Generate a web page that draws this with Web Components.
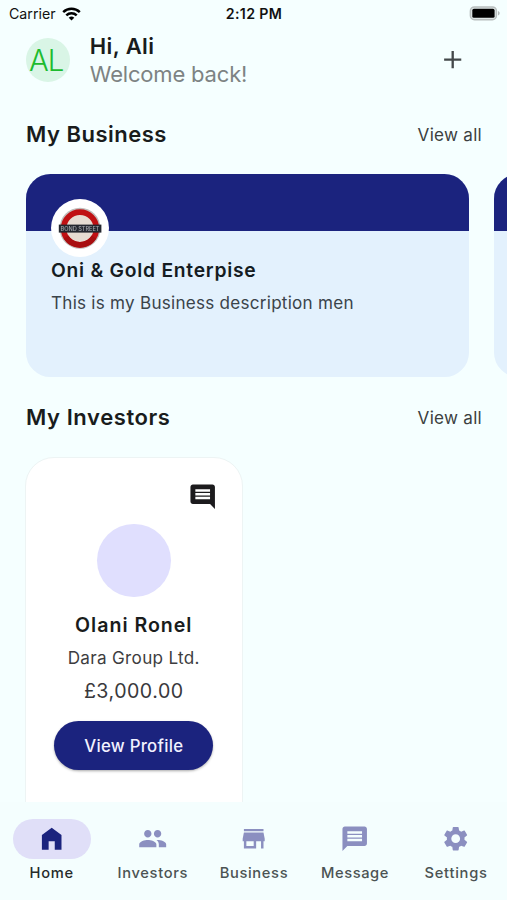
<!DOCTYPE html>
<html lang="en">
<head>
<meta charset="utf-8">
<title>Home</title>
<style>
html, body { margin: 0; height: 100%; }
body { background: #f5ffff; font-family: Inter, "Liberation Sans", sans-serif; color: #191c1c; overflow: hidden; }
</style>
</head>
<body>
<app-screen>
  <status-bar slot="status"></status-bar>
  <user-header initials="AL" greeting="Hi, Ali" message="Welcome back!"></user-header>
  <section-head style="--ls:.5px">My Business</section-head>
  <card-row>
    <business-card>
      <span slot="name">Oni &amp; Gold Enterpise</span>
      <span slot="desc">This is my Business description men</span>
    </business-card>
    <business-card bare></business-card>
  </card-row>
  <section-head style="--ls:.58px">My Investors</section-head>
  <investor-card>
    <span slot="name">Olani Ronel</span>
    <span slot="company">Dara Group Ltd.</span>
    <span slot="amount">£3,000.00</span>
  </investor-card>
  <nav-bar slot="nav">
    <nav-item icon="home" active style="--ls:.75px">Home</nav-item>
    <nav-item icon="people" style="--ls:.66px">Investors</nav-item>
    <nav-item icon="store" style="--ls:.65px">Business</nav-item>
    <nav-item icon="message" style="--ls:.57px">Message</nav-item>
    <nav-item icon="settings" style="--ls:.74px">Settings</nav-item>
  </nav-bar>
</app-screen>
<script>
const ICONS = {
  add: 'M19 12.95h-6.05V19h-1.9v-6.05H5v-1.9h6.05V5h1.9v6.05H19z',
  home: 'M4 21V9l8-6 8 6v12h-5.5v-7h-5v7z',
  people: 'M16 11c1.66 0 2.99-1.34 2.99-3S17.66 5 16 5s-3 1.34-3 3 1.34 3 3 3zm-8 0c1.66 0 2.99-1.34 2.99-3S9.66 5 8 5 5 6.34 5 8s1.34 3 3 3zm0 2c-2.33 0-7 1.17-7 3.5V19h14v-2.5c0-2.33-4.67-3.5-7-3.5zm8 0c-.29 0-.62.02-.97.05 1.16.84 1.97 1.97 1.97 3.45V19h6v-2.5c0-2.33-4.67-3.5-7-3.5z',
  store: 'M20 4H4v2h16V4zm1 10v-2l-1-5H4l-1 5v2h1v6h10v-6h4v6h2v-6h1zm-9 4H6v-4h6v4z',
  message: 'M20 2H4c-1.1 0-1.99.9-1.99 2L2 22l4-4h14c1.1 0 2-.9 2-2V4c0-1.1-.9-2-2-2zm-2 12H6v-2h12v2zm0-3H6V9h12v2zm0-3H6V6h12v2z',
  comment: 'M21.99 4c0-1.1-.89-2-1.99-2H4c-1.1 0-2 .9-2 2v12c0 1.1.9 2 2 2h14l4 4-.01-18zM18 14H6v-2h12v2zm0-3H6V9h12v2zm0-3H6V6h12v2z',
  settings: 'M19.14 12.94c.04-.3.06-.61.06-.94 0-.32-.02-.64-.07-.94l2.03-1.58c.18-.14.23-.41.12-.61l-1.92-3.32c-.12-.22-.37-.29-.59-.22l-2.39.96c-.5-.38-1.03-.7-1.62-.94l-.36-2.54c-.04-.24-.24-.41-.48-.41h-3.84c-.24 0-.43.17-.47.41l-.36 2.54c-.59.24-1.13.57-1.62.94l-2.39-.96c-.22-.08-.47 0-.59.22L2.74 8.87c-.12.21-.08.47.12.61l2.03 1.58c-.05.3-.09.63-.09.94s.02.64.07.94l-2.03 1.58c-.18.14-.23.41-.12.61l1.92 3.32c.12.22.37.29.59.22l2.39-.96c.5.38 1.03.7 1.62.94l.36 2.54c.05.24.24.41.48.41h3.84c.24 0 .44-.17.47-.41l.36-2.54c.59-.24 1.13-.56 1.62-.94l2.39.96c.22.08.47 0 .59-.22l1.92-3.32c.12-.22.07-.47-.12-.61l-2.01-1.58zM12 15.6c-1.98 0-3.6-1.62-3.6-3.6s1.62-3.6 3.6-3.6 3.6 1.62 3.6 3.6-1.62 3.6-3.6 3.6z'
};

const define = (name, render) => customElements.define(name, class extends HTMLElement {
  constructor() { super(); this.attachShadow({ mode: 'open' }); }
  connectedCallback() { this.shadowRoot.innerHTML = render(this); }
});

define('md-icon', el => `
<style>:host{display:block;width:29.4px;height:29.4px}svg{display:block;width:100%;height:100%;fill:currentColor}</style>
<svg viewBox="0 0 24 24"><path d="${ICONS[el.getAttribute('name')]}"/></svg>`);

define('app-screen', () => `
<style>
:host{display:flex;flex-direction:column;width:507px;height:900px;overflow:hidden}
main{flex:1;min-height:0;overflow:hidden}
</style>
<slot name="status"></slot><main><slot></slot></main><slot name="nav"></slot>`);

define('status-bar', () => `
<style>
:host{display:grid;grid-template-columns:1fr auto 1fr;align-items:center;height:25px;padding:2px 7px 0 9px;box-sizing:border-box;font-size:14.2px;line-height:23px;color:#111}
.left{display:flex;align-items:center;gap:6px;letter-spacing:0}
.time{font-weight:600;letter-spacing:.38px;margin-right:1px}
.right{justify-self:end}
svg{display:block}
</style>
<div class="left"><span>Carrier</span>
<svg width="19" height="14" viewBox="0 0 19 14" fill="none" stroke="#000" stroke-width="2.5"><path d="M1.2 5.1a12 12 0 0 1 16.6 0M4.3 8.4a7.5 7.5 0 0 1 10.4 0"/><path d="M9.5 13.6L6.7 10.8a4 4 0 0 1 5.6 0z" fill="#000" stroke="none"/></svg></div>
<div class="time">2:12 PM</div>
<svg class="right" width="31" height="15" viewBox="0 0 31 15"><rect x="1.4" y=".9" width="26" height="12.8" rx="4" fill="#dfe7e7" stroke="#b8bebe" stroke-width="1.5"/><rect x="3.3" y="2.8" width="22.3" height="9" rx="1.6" fill="#000"/><path d="M29 5.1c2.2.8 2.2 3.6 0 4.4z" fill="#b3b9b9"/></svg>`);

define('user-header', el => `
<style>
:host{display:flex;align-items:center;height:70px;padding:0 39.5px 0 25.6px;box-sizing:border-box}
.avatar{flex:none;width:44px;height:44px;border-radius:50%;background:#d9f5e6;color:#1dbb2f;font-size:29.4px;line-height:45px;font-weight:350;letter-spacing:-1.2px;display:flex;justify-content:center;padding-right:3px;box-sizing:border-box}
.text{flex:1;margin-left:20.2px;font-size:22px;line-height:28px}
.hi{font-weight:600;letter-spacing:.4px}
.msg{color:#7d8383;letter-spacing:-.18px}
md-icon{color:#43484a}
</style>
<div class="avatar">${el.getAttribute('initials')}</div>
<div class="text"><div class="hi">${el.getAttribute('greeting')}</div><div class="msg">${el.getAttribute('message')}</div></div>
<md-icon name="add"></md-icon>`);

define('section-head', () => `
<style>
:host{display:flex;justify-content:space-between;align-items:center;height:77px;padding:0 25px 0 26px;font-size:22px;font-weight:600;letter-spacing:var(--ls)}
a{font-size:17.1px;font-weight:400;letter-spacing:.27px;color:#3b4040;padding-top:1px}
</style>
<span><slot></slot></span><a>View all</a>`);

define('card-row', () => `
<style>:host{display:flex;gap:24.5px;padding:2.3px 0 1.7px 26px;width:max-content}</style><slot></slot>`);

define('business-card', el => `
<style>
:host{display:block;width:443.3px;height:202.3px;border-radius:24.5px;overflow:hidden;background:#e3f1fd;box-sizing:border-box}
.band{height:56.5px;background:#1b237e;padding:24.4px 0 0 24.8px;box-sizing:border-box}
.logo{width:58.6px;height:58.6px;border-radius:50%;background:#fff;display:grid;place-items:center;position:relative}
svg{display:block;width:46px;height:46px;filter:blur(.6px)}
.body{padding:25.7px 25px 0}
.name{font-size:19.3px;line-height:28px;font-weight:600;letter-spacing:.74px;color:#151c22}
.desc{font-size:17.1px;line-height:24px;letter-spacing:.25px;color:#3a434a;margin-top:6.6px}
</style>
<div class="band">${el.hasAttribute('bare') ? '' : `<div class="logo"><svg viewBox="0 0 46 46">
<circle cx="23" cy="23.3" r="20.5" fill="#968f8c" opacity=".6"/><circle cx="23" cy="23.5" r="16.4" fill="#e6dcd2" stroke="#c01013" stroke-width="5.6"/>
<path d="M9 32A16.4 16.4 0 0 0 37 32" fill="none" stroke="#a80e10" stroke-width="5.6"/>
<rect x="1.8" y="19.6" width="42.6" height="8" fill="#24272f"/>
<text x="23" y="25.7" text-anchor="middle" textLength="39" font-size="5.6" font-weight="500" fill="#a5a8ad">BOND STREET</text></svg></div>`}</div>
<div class="body"><div class="name"><slot name="name"></slot></div><div class="desc"><slot name="desc"></slot></div></div>`);

define('investor-card', () => `
<style>
:host{display:flex;flex-direction:column;align-items:center;width:217.5px;height:400px;margin:2px 0 0 25px;box-sizing:border-box;border:1px solid #edf4f4;border-radius:29px;background:#fff;text-align:center}
md-icon{align-self:flex-end;margin:23.7px 24.6px 0 0;color:#1c1b1d}
.photo{width:73.5px;height:73.5px;border-radius:50%;background:#e0dffe;margin-top:12.5px}
.name{font-size:19.6px;line-height:28px;font-weight:600;letter-spacing:.98px;margin-top:13.4px}
.company{font-size:17.1px;line-height:24px;letter-spacing:.32px;color:#3d3d40;margin-top:7px}
.amount{font-size:19.6px;line-height:28px;letter-spacing:.5px;color:#39393c;margin-top:7px}
button{font:500 16.8px/24px Inter,sans-serif;letter-spacing:.26px;color:#f2f1ff;background:#1b237e;border:0;border-radius:25px;width:159px;height:48.8px;padding:0;margin-top:16.6px;box-shadow:0 1.2px 2.4px #0000004d}
</style>
<md-icon name="comment"></md-icon>
<div class="photo"></div>
<div class="name"><slot name="name"></slot></div>
<div class="company"><slot name="company"></slot></div>
<div class="amount"><slot name="amount"></slot></div>
<button>View Profile</button>`);

define('nav-bar', () => `
<style>:host{display:flex;flex:none;height:97.8px;padding:0 0 0 1.2px;box-sizing:border-box;background:#f4fefe}</style><slot></slot>`);

define('nav-item', el => `
<style>
:host{display:flex;flex-direction:column;align-items:center;flex:0 0 101.1px;padding-top:17.2px;box-sizing:border-box;font-size:14.7px;line-height:20px;font-weight:500;letter-spacing:var(--ls);color:#4b5353}
:host([active]){color:#262b2b}
.pill{width:78.4px;height:39.2px;border-radius:20px;display:grid;place-items:center;color:#8b8fc0;margin-bottom:4.4px}
:host([active]) .pill{background:#e0dff8;color:#1b237e}
</style>
<div class="pill"><md-icon name="${el.getAttribute('icon')}"></md-icon></div><span><slot></slot></span>`);
</script>
</body>
</html>
